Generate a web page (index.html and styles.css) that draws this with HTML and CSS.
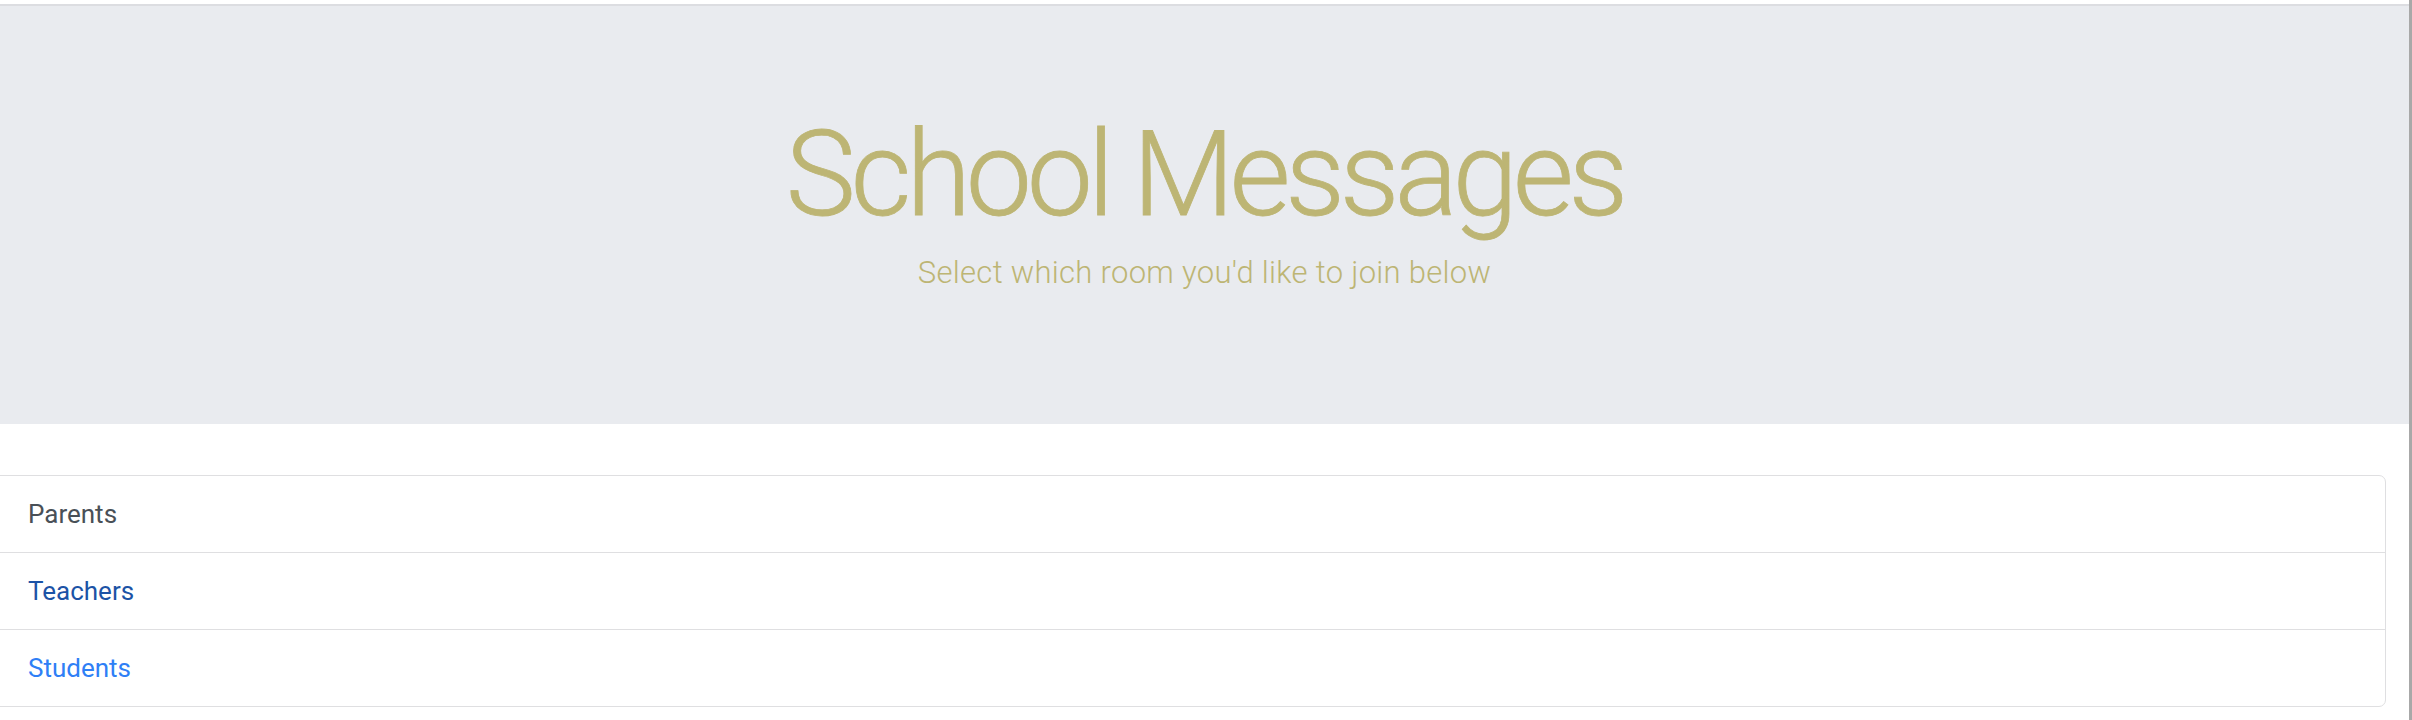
FILE: index.html
```html
<!DOCTYPE html>
<html lang="en">
<head>
<meta charset="utf-8">
<title>School Messages</title>
<link rel="stylesheet" href="styles.css">
</head>
<body>
  <div class="page">
    <header class="jumbotron">
      <h1 class="title">School Messages</h1>
      <p class="lead">Select which room you'd like to join below</p>
    </header>
    <ul class="rooms">
      <li class="room room-parents">Parents</li>
      <li class="room room-teachers">Teachers</li>
      <li class="room room-students">Students</li>
    </ul>
  </div>
  <div class="edge"></div>
</body>
</html>
```
FILE: styles.css
```css
html, body {
  margin: 0;
  padding: 0;
  background: #ffffff;
}
body {
  display: flex;
  min-height: 720px;
  overflow: hidden;
  font-family: Roboto, "Liberation Sans", sans-serif;
}
.page {
  flex: 1;
  min-width: 0;
}
.edge {
  width: 3px;
  background: #a8a8a8;
}
.jumbotron {
  margin-top: 4px;
  border-top: 2px solid #dcdde1;
  background: #e9ebef;
  padding: 98px 0 128px;
  display: flex;
  flex-direction: column;
  align-items: center;
  color: #bdb574;
}
.title {
  margin: 0;
  font-size: 118px;
  font-weight: 300;
  line-height: 142px;
  letter-spacing: -5.2px;
  -webkit-text-stroke: 0.8px #bdb574;
}
.lead {
  margin: 4px 0 0;
  font-size: 31px;
  font-weight: 300;
  line-height: 46px;
  letter-spacing: 0.3px;
}
.rooms {
  list-style: none;
  margin: 51px 23px 0 -20px;
  padding: 0;
  border: 1px solid #dfdfe1;
  border-radius: 7px;
}
.room {
  padding: 0 47px;
  font-size: 26px;
  line-height: 76px;
}
.room + .room {
  border-top: 1px solid #dfdfe1;
}
.room-parents { color: #495057; }
.room-teachers { color: #1c53a6; }
.room-students { color: #2f7ff6; }
```
